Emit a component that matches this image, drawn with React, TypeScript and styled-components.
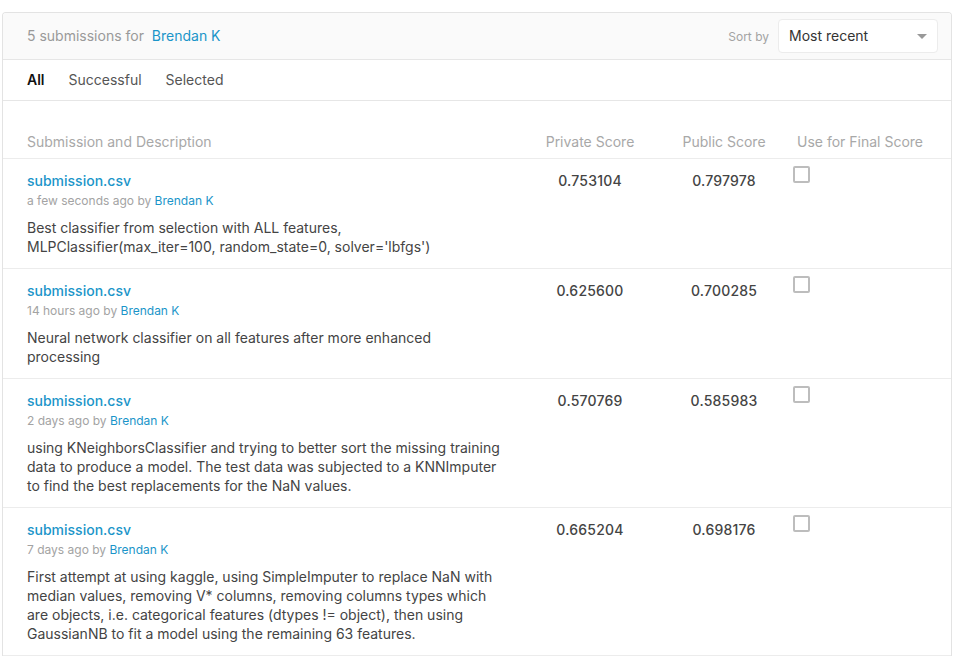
import React from "react";
import styled, { createGlobalStyle } from "styled-components";

const Global = createGlobalStyle`
  html, body { margin: 0; padding: 0; background: #fff; }
  body { font-family: Inter, "Noto Sans", sans-serif; -webkit-font-smoothing: antialiased; }
`;

const Page = styled.div`
  padding: 12px 7px 0 2px;
`;

const Card = styled.div`
  border: 1px solid #e3e3e3;
  border-bottom: none;
  border-radius: 4px 4px 0 0;
  overflow: hidden;
`;

const Header = styled.div`
  display: flex;
  align-items: center;
  justify-content: space-between;
  height: 46px;
  padding: 0 13px 0 24px;
  background: #fafafa;
  border-bottom: 1px solid #e6e6e6;
`;

const Title = styled.div`
  font-size: 14px;
  color: #999;
  margin-top: -1px;
`;

const Link = styled.a<{ $size?: number; $weight?: number }>`
  color: #1b95c9;
  text-decoration: none;
  font-size: ${(p) => p.$size ?? 14}px;
  font-weight: ${(p) => p.$weight ?? 400};
`;

const SortWrap = styled.div`
  display: flex;
  align-items: center;
  gap: 9px;
`;

const SortLabel = styled.span`
  font-size: 12px;
  color: #a3a3a3;
`;

const Select = styled.div`
  width: 160px;
  height: 34px;
  box-sizing: border-box;
  background: #fff;
  border: 1px solid #ececec;
  border-radius: 4px;
  display: flex;
  align-items: center;
  justify-content: space-between;
  padding: 0 10px 1px 10px;
  margin-top: -1px;
  font-size: 14px;
  color: #333;
`;

const Caret = styled.span`
  width: 0;
  height: 0;
  border-left: 5px solid transparent;
  border-right: 5px solid transparent;
  border-top: 5px solid #999;
  margin-top: 2px;
`;

const Tabs = styled.div`
  display: flex;
  align-items: center;
  gap: 24px;
  height: 39px;
  padding: 0 24px 1px;
  border-bottom: 1px solid #e6e6e6;
`;

const Tab = styled.span<{ $active?: boolean }>`
  font-size: 14px;
  color: ${(p) => (p.$active ? "#111" : "#555")};
  font-weight: ${(p) => (p.$active ? 600 : 400)};
`;

const Table = styled.div`
  padding-top: 23px;
`;

const Row = styled.div<{ $head?: boolean }>`
  display: grid;
  grid-template-columns: 522px 130px 138px 1fr;
  border-bottom: 1px solid #ececec;
  ${(p) => (p.$head ? "height: 34px; align-items: center;" : "")}
`;

const HeadCell = styled.div<{ $align?: string; $pad?: number }>`
  font-size: 14px;
  color: #a8a8a8;
  text-align: ${(p) => p.$align ?? "center"};
  padding-left: ${(p) => p.$pad ?? 0}px;
`;

const Main = styled.div`
  padding: 12px 20px 12px 24px;
  display: flex;
  flex-direction: column;
`;

const FileName = styled(Link)`
  line-height: 19px;
  font-weight: 500;
`;

const Meta = styled.div`
  font-size: 12px;
  line-height: 21px;
  color: #a3a3a3;
`;

const Desc = styled.div`
  margin-top: 7px;
  font-size: 14px;
  line-height: 19px;
  color: #444;
`;

const Score = styled.div`
  padding-top: 12px;
  font-size: 14px;
  line-height: 19px;
  color: #444;
  font-weight: 500;
  text-align: center;
  letter-spacing: 0.2px;
`;

const CheckCell = styled.div`
  padding-top: 7px;
`;

const Check = styled.span`
  display: block;
  width: 17px;
  height: 17px;
  box-sizing: border-box;
  border: 2px solid #bdbdbd;
  border-radius: 2px;
`;

const rows = [
  {
    when: "a few seconds ago",
    priv: "0.753104",
    pub: "0.797978",
    desc: "Best classifier from selection with ALL features, MLPClassifier(max_iter=100, random_state=0, solver='lbfgs')",
  },
  {
    when: "14 hours ago",
    priv: "0.625600",
    pub: "0.700285",
    desc: "Neural network classifier on all features after more enhanced processing",
  },
  {
    when: "2 days ago",
    priv: "0.570769",
    pub: "0.585983",
    desc: "using KNeighborsClassifier and trying to better sort the missing training data to produce a model. The test data was subjected to a KNNImputer to find the best replacements for the NaN values.",
  },
  {
    when: "7 days ago",
    priv: "0.665204",
    pub: "0.698176",
    desc: "First attempt at using kaggle, using SimpleImputer to replace NaN with median values, removing V* columns, removing columns types which are objects, i.e. categorical features (dtypes != object), then using GaussianNB to fit a model using the remaining 63 features.",
  },
];

export default function App() {
  return (
    <Page>
      <Global />
      <Card>
        <Header>
          <Title>
            5 submissions for <Link href="#">&nbsp;Brendan K</Link>
          </Title>
          <SortWrap>
            <SortLabel>Sort by</SortLabel>
            <Select>
              <span>Most recent</span>
              <Caret />
            </Select>
          </SortWrap>
        </Header>
        <Tabs>
          <Tab $active>All</Tab>
          <Tab>Successful</Tab>
          <Tab>Selected</Tab>
        </Tabs>
        <Table>
          <Row $head>
            <HeadCell $align="left" $pad={24}>Submission and Description</HeadCell>
            <HeadCell>Private Score</HeadCell>
            <HeadCell>Public Score</HeadCell>
            <HeadCell $align="left" $pad={4}>Use for Final Score</HeadCell>
          </Row>
          {rows.map((r, i) => (
            <Row key={i}>
              <Main>
                <FileName href="#">submission.csv</FileName>
                <Meta>
                  {r.when} by <Link href="#" $size={12}>Brendan K</Link>
                </Meta>
                <Desc>{r.desc}</Desc>
              </Main>
              <Score>{r.priv}</Score>
              <Score>{r.pub}</Score>
              <CheckCell>
                <Check />
              </CheckCell>
            </Row>
          ))}
        </Table>
      </Card>
    </Page>
  );
}
